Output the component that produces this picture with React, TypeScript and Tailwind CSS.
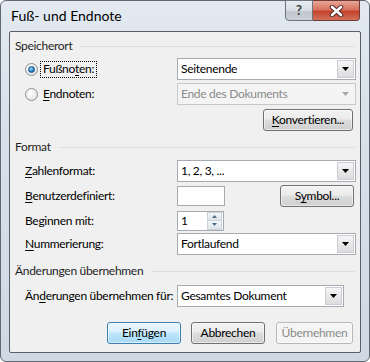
import React from "react";

const U = ({ children }: { children: React.ReactNode }) => (
  <span className="underline underline-offset-[2px] decoration-1">{children}</span>
);

function Arrow({ disabled }: { disabled?: boolean }) {
  return (
    <svg width="7" height="4" viewBox="0 0 7 4">
      <path d="M0 0H7L3.5 4Z" fill={disabled ? "#a6a6a6" : "#000"} />
    </svg>
  );
}

function Combo({ value, w = "w-[179px]", disabled }: { value: string; w?: string; disabled?: boolean }) {
  return (
    <div
      className={`h-[22px] ${w} border flex items-center ${
        disabled ? "border-[#c5c8cc] bg-[#f4f4f4] text-[#8a8a8a]" : "border-[#a7abb0] bg-white text-black"
      }`}
    >
      <span className="flex-1 pl-[3px] leading-none">{value}</span>
      {disabled ? (
        <div className="w-[17px] h-[18px] mr-px flex items-center justify-center">
          <Arrow disabled />
        </div>
      ) : (
        <div className="w-[17px] h-[18px] mr-px border border-[#c9ced4] bg-gradient-to-b from-[#f6f6f6] to-[#dcdcdc] flex items-center justify-center">
          <Arrow />
        </div>
      )}
    </div>
  );
}

function Btn({
  children,
  w,
  kind = "normal",
}: {
  children: React.ReactNode;
  w: string;
  kind?: "normal" | "default" | "disabled";
}) {
  const cls =
    kind === "default"
      ? "border-[#3c7fb1] bg-[linear-gradient(#eaf6fd_0%,#d9f0fc_45%,#bee6fd_50%,#a7d9f5_100%)] text-black"
      : kind === "disabled"
      ? "border-[#b5b8bb] bg-[#f4f4f4] text-[#8b8b8b]"
      : "border-[#707070] bg-[linear-gradient(#f2f2f2_0%,#ebebeb_45%,#dddddd_50%,#cfcfcf_100%)] text-black";
  return (
    <div className={`h-[22px] ${w} rounded-[3px] border ${cls} flex items-center justify-center shadow-[inset_0_0_0_1px_rgba(255,255,255,0.55)]`}>
      {children}
    </div>
  );
}

function Header({ title }: { title: string }) {
  return (
    <div className="h-[16px] flex items-center pl-[5px] pr-[5px] gap-[8px]">
      <span className="text-[#1e1e1e] leading-none">{title}</span>
      <div className="flex-1 h-px bg-[#d5dfe5]" />
    </div>
  );
}

function Radio({ checked }: { checked?: boolean }) {
  return (
    <div className="w-[13px] h-[13px] rounded-full border border-[#8e8f8f] bg-[radial-gradient(circle_at_40%_35%,#ffffff,#d9dcdf)] flex items-center justify-center">
      {checked && (
        <div className="w-[7px] h-[7px] rounded-full bg-[radial-gradient(circle_at_40%_35%,#8fe0ff,#1a6fb5_70%,#0d4a85)] border border-[#1b4f86]" />
      )}
    </div>
  );
}

export default function App() {
  return (
    <div
      className="w-[370px] h-[362px] overflow-hidden relative text-[12px] text-black"
      style={{ fontFamily: "Lato, 'Noto Sans', sans-serif" }}
    >
      <div className="w-[370px] h-[362px] rounded-[6px] border border-[#5f6a74] bg-[linear-gradient(180deg,#e2e9f1_0%,#d9e2eb_30%,#cfd9e4_100%)] flex flex-col">
        {/* title bar */}
        <div className="h-[30px] flex items-start justify-between pl-[10px] pr-[9px]">
          <div className="pt-[6px] text-[14px] leading-[18px] text-black">Fuß- und Endnote</div>
          <div className="flex mt-[-1px]">
            <div className="w-[28px] h-[21px] rounded-bl-[4px] border border-[#6d7680] bg-[linear-gradient(#e8ecf0_0%,#d7dde3_50%,#bfc7cf_51%,#c9d0d7_100%)] flex items-center justify-center text-[#3c3c3c] text-[13px] font-bold leading-none">
              ?
            </div>
            <div className="w-[47px] h-[21px] rounded-br-[4px] border border-l-0 border-[#6d3c34] bg-[linear-gradient(#e7a597_0%,#d8735f_45%,#c5432b_55%,#d2705c_100%)] flex items-center justify-center">
              <svg width="15" height="12" viewBox="0 0 15 12">
                <path
                  d="M3 2L12 10M12 2L3 10"
                  stroke="#4a2a25"
                  strokeWidth="4.4"
                  strokeLinecap="round"
                  fill="none"
                />
                <path
                  d="M3 2L12 10M12 2L3 10"
                  stroke="#fff"
                  strokeWidth="2.6"
                  strokeLinecap="round"
                  fill="none"
                />
              </svg>
            </div>
          </div>
        </div>
        {/* client */}
        <div className="mx-[8px] h-[322px] border border-[#5b5f63] rounded-[2px] bg-[#f0f0f0] flex flex-col pt-[6px] tracking-[-0.3px]">
          <Header title="Speicherort" />
          {/* Fußnoten */}
          <div className="mt-[4px] flex items-center h-[22px]">
            <div className="w-[167px] flex items-center pl-[15px]">
              <Radio checked />
              <div className="ml-[2px] px-[2px] h-[17px] border border-dotted border-black flex items-center leading-none">
                Fußno<U>t</U>en:
              </div>
            </div>
            <Combo value="Seitenende" />
          </div>
          {/* Endnoten */}
          <div className="mt-[3px] flex items-center h-[22px]">
            <div className="w-[167px] flex items-center pl-[15px]">
              <Radio />
              <div className="ml-[5px] leading-none">
                <U>E</U>ndnoten:
              </div>
            </div>
            <Combo value="Ende des Dokuments" disabled />
          </div>
          <div className="mt-[4px] flex justify-end pr-[7px]">
            <Btn w="w-[90px]">
              <span>
                <U>K</U>onvertieren...
              </span>
            </Btn>
          </div>

          <div className="mt-[8px]">
            <Header title="Format" />
          </div>
          <div className="mt-[5px] flex items-center h-[22px]">
            <div className="w-[167px] pl-[15px] leading-none">
              <U>Z</U>ahlenformat:
            </div>
            <Combo value="1, 2, 3, ..." />
          </div>
          <div className="mt-[3px] flex items-center h-[22px]">
            <div className="w-[167px] pl-[15px] leading-none">
              <U>B</U>enutzerdefiniert:
            </div>
            <div className="w-[48px] h-[20px] border border-[#a7abb0] bg-white" />
            <div className="flex-1 flex justify-end pr-[6px]">
              <Btn w="w-[74px]">
                <span>
                  S<U>y</U>mbol...
                </span>
              </Btn>
            </div>
          </div>
          <div className="mt-[3px] flex items-center h-[21px]">
            <div className="w-[167px] pl-[15px] leading-none">Beginnen mit:</div>
            <div className="w-[47px] h-[20px] border border-[#a7abb0] bg-white flex items-center">
              <span className="flex-1 pl-[3px] leading-none">1</span>
              <div className="w-[15px] h-[18px] mr-px flex flex-col">
                <div className="h-[9px] border border-[#c7d2dc] bg-gradient-to-b from-[#f4f7fa] to-[#dde4ea] flex items-center justify-center">
                  <svg width="5" height="3" viewBox="0 0 5 3">
                    <path d="M0 3H5L2.5 0Z" fill="#4d6a87" />
                  </svg>
                </div>
                <div className="h-[9px] border border-t-0 border-[#c7d2dc] bg-gradient-to-b from-[#f4f7fa] to-[#dde4ea] flex items-center justify-center">
                  <svg width="5" height="3" viewBox="0 0 5 3">
                    <path d="M0 0H5L2.5 3Z" fill="#4d6a87" />
                  </svg>
                </div>
              </div>
            </div>
          </div>
          <div className="mt-[2px] flex items-center h-[22px]">
            <div className="w-[167px] pl-[15px] leading-none">
              <U>N</U>ummerierung:
            </div>
            <Combo value="Fortlaufend" />
          </div>

          <div className="mt-[8px]">
            <Header title="Änderungen übernehmen" />
          </div>
          <div className="mt-[6px] flex items-center h-[21px]">
            <div className="w-[167px] pl-[15px] leading-none whitespace-nowrap">
              Än<U>d</U>erungen übernehmen für:
            </div>
            <Combo value="Gesamtes Dokument" w="w-[167px]" />
          </div>
          <div className="mt-[16px] flex items-center pl-[97px] gap-[10px]">
            <Btn w="w-[74px]" kind="default">
              <span>
                Ein<U>f</U>ügen
              </span>
            </Btn>
            <Btn w="w-[74px]">
              <span>Abbrechen</span>
            </Btn>
            <div className="ml-px">
              <Btn w="w-[77px]" kind="disabled">
                <span>Übernehmen</span>
              </Btn>
            </div>
          </div>
        </div>
      </div>
    </div>
  );
}
